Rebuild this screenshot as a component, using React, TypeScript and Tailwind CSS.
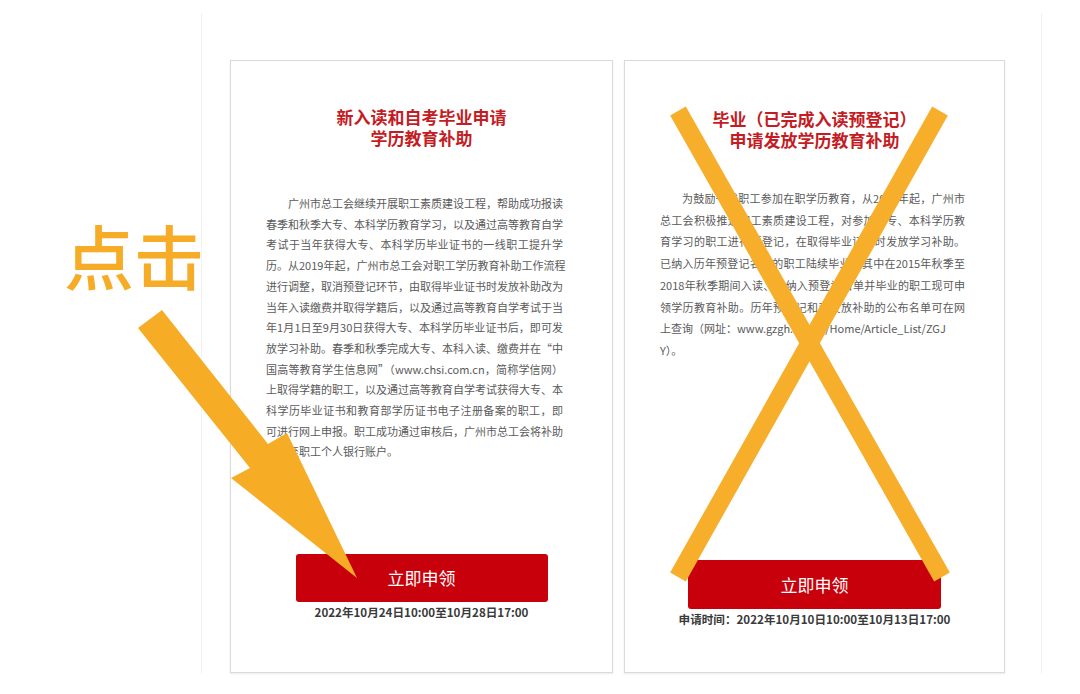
import React from "react";

const leftLines = [
  "广州市总工会继续开展职工素质建设工程，帮助成功报读",
  "春季和秋季大专、本科学历教育学习，以及通过高等教育自学",
  "考试于当年获得大专、本科学历毕业证书的一线职工提升学",
  "历。从2019年起，广州市总工会对职工学历教育补助工作流程",
  "进行调整，取消预登记环节，由取得毕业证书时发放补助改为",
  "当年入读缴费并取得学籍后，以及通过高等教育自学考试于当",
  "年1月1日至9月30日获得大专、本科学历毕业证书后，即可发",
  "放学习补助。春季和秋季完成大专、本科入读、缴费并在“中",
  "国高等教育学生信息网”（www.chsi.com.cn，简称学信网）",
  "上取得学籍的职工，以及通过高等教育自学考试获得大专、本",
  "科学历毕业证书和教育部学历证书电子注册备案的职工，即",
  "可进行网上申报。职工成功通过审核后，广州市总工会将补助",
  "发放至职工个人银行账户。",
];

const rightLines = [
  "为鼓励一线职工参加在职学历教育，从2015年起，广州市",
  "总工会积极推进职工素质建设工程，对参加大专、本科学历教",
  "育学习的职工进行预登记，在取得毕业证书时发放学习补助。",
  "已纳入历年预登记名单的职工陆续毕业，其中在2015年秋季至",
  "2018年秋季期间入读、已纳入预登记名单并毕业的职工现可申",
  "领学历教育补助。历年预登记和已发放补助的公布名单可在网",
  "上查询（网址：www.gzgh.org.cn/Home/Article_List/ZGJ",
  "Y）。",
];

function Body({
  lines,
  width,
  plain,
}: {
  lines: string[];
  width: string;
  plain: number[];
}) {
  return (
    <div className={`${width} text-[11px] text-[#5a5a5a]`}>
      {lines.map((l, i) => {
        const noJustify = i === lines.length - 1 || plain.includes(i);
        return (
          <div
            key={i}
            className={`whitespace-nowrap ${i === 0 ? "pl-[22px]" : ""} ${
              noJustify ? "" : "[text-align-last:justify] text-justify"
            }`}
          >
            {l}
          </div>
        );
      })}
    </div>
  );
}

export default function App() {
  return (
    <div className="relative w-[1080px] h-[694px] overflow-hidden bg-white [font-family:'Noto_Sans_CJK_SC','Noto_Sans',sans-serif]">
      <div className="ml-[201px] mt-[13px] w-[841px] h-[660px] border-x border-[#f1f1f1] pl-[28px] pt-[47px] flex gap-[11px]">
        {/* Left card */}
        <div className="w-[383px] h-[613px] border border-[#dadada] shadow-[0_1px_2px_rgba(0,0,0,0.08)] bg-white flex flex-col">
          <div className="pt-[45px] text-center text-[17px] leading-[21px] font-bold text-[#c41c24]">
            新入读和自考毕业申请
            <br />
            学历教育补助
          </div>
          <div className="mt-[45px] pl-[35px] leading-[20.7px]">
            <Body lines={leftLines} width="w-[297px]" plain={[]} />
          </div>
          <div className="flex-1" />
          <div className="flex flex-col items-center pb-[52px]">
            <div className="w-[252px] h-[48px] rounded-[3px] bg-[#c8000b] flex items-center justify-center text-white text-[17px]">
              立即申领
            </div>
            <div className="mt-[2px] text-[11.6px] leading-[16px] font-bold text-[#3a3a3a]">
              2022年10月24日10:00至10月28日17:00
            </div>
          </div>
        </div>

        {/* Right card */}
        <div className="w-[381px] h-[613px] border border-[#dadada] shadow-[0_1px_2px_rgba(0,0,0,0.08)] bg-white flex flex-col">
          <div className="pt-[47px] text-center text-[17px] leading-[21px] font-bold text-[#c41c24]">
            毕业（已完成入读预登记）
            <br />
            申请发放学历教育补助
          </div>
          <div className="mt-[38px] pl-[35px] leading-[21.7px]">
            <Body lines={rightLines} width="w-[305px]" plain={[6]} />
          </div>
          <div className="flex-1" />
          <div className="flex flex-col items-center pb-[45px]">
            <div className="w-[253px] h-[49px] rounded-[3px] bg-[#c8000b] flex items-center justify-center text-white text-[17px]">
              立即申领
            </div>
            <div className="mt-[2px] text-[11.6px] leading-[16px] font-bold text-[#3a3a3a]">
              申请时间：2022年10月10日10:00至10月13日17:00
            </div>
          </div>
        </div>
      </div>

      {/* Annotations */}
      <div className="absolute left-[64px] top-[220px] text-[70px] leading-none font-medium text-[#f6ac27]">
        点击
      </div>
      <svg
        className="absolute left-0 top-0 pointer-events-none"
        width="1080"
        height="694"
        viewBox="0 0 1080 694"
      >
        <polygon
          points="162,310 268,444 287,433 357,578 231,478 250,468 138,328"
          fill="#f6ac25"
        />
        <line x1="678" y1="111" x2="942" y2="577" stroke="#f6ae2b" strokeWidth="18" />
        <line x1="940" y1="111" x2="678" y2="577" stroke="#f6ae2b" strokeWidth="18" />
      </svg>
    </div>
  );
}
